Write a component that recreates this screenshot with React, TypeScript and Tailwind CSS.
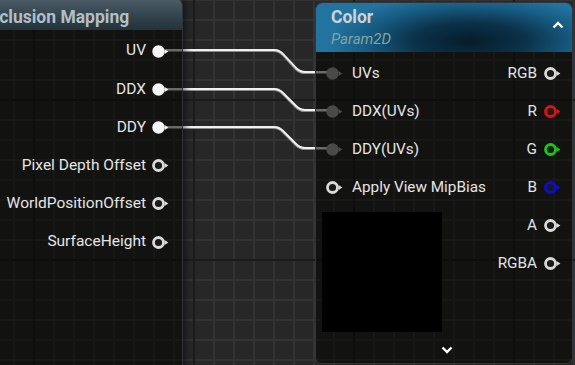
import React from 'react';

type PinKind = 'filled' | 'ring' | 'input';

function Pin({ kind, color = '#dadada' }: { kind: PinKind; color?: string }) {
  const fill = kind === 'input' ? '#4a4a4a' : kind === 'filled' ? '#f6f6f6' : color;
  return (
    <svg width="18" height="13" viewBox="0 0 18 13" className="shrink-0">
      {kind === 'ring' ? (
        <circle cx="6.5" cy="6.5" r="5" fill="#1a1a1a" stroke={color} strokeWidth="2.8" />
      ) : (
        <circle cx="6.5" cy="6.5" r="6.2" fill={fill} />
      )}
      <polygon points="12.6,3.9 16.4,6.5 12.6,9.1" fill={fill} />
    </svg>
  );
}

function Chevron({ up }: { up?: boolean }) {
  return (
    <svg width="12" height="8" viewBox="0 0 12 8">
      <path
        d={up ? 'M1.5 6.5 L6 2 L10.5 6.5' : 'M1.5 1.5 L6 6 L10.5 1.5'}
        fill="none"
        stroke="#ffffff"
        strokeWidth="2.4"
      />
    </svg>
  );
}

const leftPins: { label: string; kind: PinKind }[] = [
  { label: 'UV', kind: 'filled' },
  { label: 'DDX', kind: 'filled' },
  { label: 'DDY', kind: 'filled' },
  { label: 'Pixel Depth Offset', kind: 'ring' },
  { label: 'WorldPositionOffset', kind: 'ring' },
  { label: 'SurfaceHeight', kind: 'ring' },
];

const inputs: { label: string; kind: PinKind }[] = [
  { label: 'UVs', kind: 'input' },
  { label: 'DDX(UVs)', kind: 'input' },
  { label: 'DDY(UVs)', kind: 'input' },
  { label: 'Apply View MipBias', kind: 'ring' },
];

const outputs: { label: string; color: string }[] = [
  { label: 'RGB', color: '#dadada' },
  { label: 'R', color: '#e21010' },
  { label: 'G', color: '#12cc12' },
  { label: 'B', color: '#0c0cd8' },
  { label: 'A', color: '#dadada' },
  { label: 'RGBA', color: '#dadada' },
];

// wire from an output pin on the left node to an input on the Color node
function wire(y1: number, y2: number) {
  return `M166 ${y1} L274 ${y1} Q279 ${y1} 283 ${y1 + 4} L296 ${y2 - 4} Q300 ${y2} 305 ${y2} L330 ${y2}`;
}

export default function App() {
  return (
    <div className="relative w-[575px] h-[365px] overflow-hidden bg-[#272727] [background-image:linear-gradient(to_right,#1b1b1b_2px,transparent_2px),linear-gradient(to_bottom,#1b1b1b_2px,transparent_2px),linear-gradient(to_right,#333333_2px,transparent_2px),linear-gradient(to_bottom,#333333_2px,transparent_2px)] [background-size:160px_160px,160px_160px,20px_20px,20px_20px] [background-position:33px_0,0_99px,13px_0,0_19px] font-['Roboto',sans-serif]">
      {/* Wires */}
      <svg className="absolute inset-0" width="575" height="365">
        {[
          [50, 72],
          [89, 110],
          [127, 148],
        ].map(([a, b]) => (
          <g key={a}>
            <path d={wire(a, b)} fill="none" stroke="#8a8a8a" strokeWidth="3" transform="translate(0 0.6)" />
            <path d={wire(a, b)} fill="none" stroke="#f0f0f0" strokeWidth="1.8" />
          </g>
        ))}
      </svg>

      {/* Occlusion Mapping node */}
      <div className="absolute left-[-60px] top-[-2px] w-[243px] h-[380px] rounded-tr-[7px] border border-[#2d3236] bg-[rgba(3,5,1,0.57)] shadow-[3px_0_6px_rgba(0,0,0,0.45)] overflow-hidden">
        <div className="h-[31px] bg-gradient-to-b from-[#4d5d67] via-[#34464f] to-[#23323b] pl-[37px] pt-[7px]">
          <div className="text-[17.5px] leading-[22px] font-bold text-[#b3bfc5] whitespace-nowrap">Occlusion Mapping</div>
        </div>
        <div className="flex flex-col items-end pt-[2px] pr-[12px]">
          {leftPins.map((p) => (
            <div key={p.label} className="h-[38.2px] flex items-center gap-[6px]">
              <span className="text-[15.5px] text-[#e4e4e4] whitespace-nowrap">{p.label}</span>
              <Pin kind={p.kind} />
            </div>
          ))}
        </div>
      </div>

      {/* Color node */}
      <div className="absolute left-[315px] top-[2px] w-[258px] h-[362px] rounded-[7px] border border-[#30363a] bg-[rgba(3,5,1,0.57)] overflow-hidden flex flex-col">
        <div className="relative h-[49px] px-[15px] pt-[3px] bg-[radial-gradient(ellipse_55%_95%_at_60%_78%,#061c2a_0%,#0b3249_40%,#175c83_75%,#2373a0_100%)]">
          <div className="text-[17.5px] leading-[22px] font-bold text-[#cfd3d6]">Color</div>
          <div className="mt-px text-[15px] leading-[20px] italic text-[#84a59c]">Param2D</div>
          <div className="absolute right-[8px] top-[18px]">
            <Chevron up />
          </div>
        </div>
        <div className="flex justify-between pt-[2px]">
          <div className="flex flex-col">
            {inputs.map((p) => (
              <div key={p.label} className="h-[38px] flex items-center pl-[10px] gap-[8px]">
                <Pin kind={p.kind} />
                <span className="text-[15.3px] text-[#e4e4e4] whitespace-nowrap">{p.label}</span>
              </div>
            ))}
            <div className="ml-[6px] mt-[6px] w-[120px] h-[120px] bg-black" />
          </div>
          <div className="flex flex-col items-end pr-[10px]">
            {outputs.map((p) => (
              <div key={p.label} className="h-[38px] flex items-center gap-[7px]">
                <span className="text-[15.3px] text-[#e4e4e4]">{p.label}</span>
                <Pin kind="ring" color={p.color} />
              </div>
            ))}
          </div>
        </div>
        <div className="flex justify-center mt-[14px] pl-[5px]">
          <Chevron />
        </div>
      </div>
    </div>
  );
}
